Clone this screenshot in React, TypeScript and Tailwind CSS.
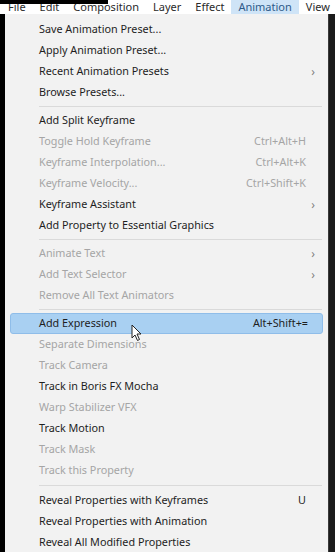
import React from "react";

type Item = {
  label: string;
  disabled?: boolean;
  shortcut?: string;
  submenu?: boolean;
  active?: boolean;
};

const groups: Item[][] = [
  [
    { label: "Save Animation Preset..." },
    { label: "Apply Animation Preset..." },
    { label: "Recent Animation Presets", submenu: true },
    { label: "Browse Presets..." },
  ],
  [
    { label: "Add Split Keyframe" },
    { label: "Toggle Hold Keyframe", disabled: true, shortcut: "Ctrl+Alt+H" },
    { label: "Keyframe Interpolation...", disabled: true, shortcut: "Ctrl+Alt+K" },
    { label: "Keyframe Velocity...", disabled: true, shortcut: "Ctrl+Shift+K" },
    { label: "Keyframe Assistant", submenu: true },
    { label: "Add Property to Essential Graphics" },
  ],
  [
    { label: "Animate Text", disabled: true, submenu: true },
    { label: "Add Text Selector", disabled: true, submenu: true },
    { label: "Remove All Text Animators", disabled: true },
  ],
  [
    { label: "Add Expression", shortcut: "Alt+Shift+=", active: true },
    { label: "Separate Dimensions", disabled: true },
    { label: "Track Camera", disabled: true },
    { label: "Track in Boris FX Mocha" },
    { label: "Warp Stabilizer VFX", disabled: true },
    { label: "Track Motion" },
    { label: "Track Mask", disabled: true },
    { label: "Track this Property", disabled: true },
  ],
  [
    { label: "Reveal Properties with Keyframes", shortcut: "U" },
    { label: "Reveal Properties with Animation" },
    { label: "Reveal All Modified Properties" },
  ],
];

const menubar = ["File", "Edit", "Composition", "Layer", "Effect", "Animation", "View"];

function MenuRow({ item }: { item: Item }) {
  const color = item.disabled ? "text-[#a5a5a5]" : "text-[#1e1e1e]";
  if (item.active) {
    return (
      <div className="mx-[5px] flex h-[21px] items-center rounded-[3px] border border-[#8fbde9] bg-[#a9d0f2] pl-[28px] pr-[2px] text-[#1e1e1e]">
        <span className="flex-1">{item.label}</span>
        <span>{item.shortcut}</span>
        <span className="w-[12px]" />
      </div>
    );
  }
  return (
    <div className={`flex h-[21px] items-center pl-[34px] pr-[8px] ${color}`}>
      <span className="flex-1 whitespace-nowrap">{item.label}</span>
      {item.shortcut && <span>{item.shortcut}</span>}
      <span className="flex w-[14px] justify-center text-[12px] text-[#808080]">
        {item.submenu ? "›" : ""}
      </span>
    </div>
  );
}

export default function App() {
  return (
    <div
      className="relative flex h-[552px] w-[335px] flex-col overflow-hidden bg-black text-[10.8px]"
      style={{ fontFamily: '"Noto Sans", "Open Sans", sans-serif' }}
    >
      {/* menu bar, cut off at the top */}
      <div className="flex h-[14px] shrink-0 items-end overflow-hidden bg-white text-[11px] text-[#2a2a2a]">
        <div className="-mb-[1px] flex items-center gap-[14px] pl-[8px] leading-[16px]">
          {menubar.map((m) => (
            <span
              key={m}
              className={
                m === "Animation"
                  ? "-mx-[7px] bg-[#cfe4f7] px-[7px] text-[#2d5a8a]"
                  : ""
              }
            >
              {m}
            </span>
          ))}
        </div>
      </div>
      <div className="absolute left-0 top-0 h-[4px] w-[108px] bg-black" />

      <div className="flex flex-1">
        <div className="w-[5px] bg-black" />
        <div className="flex-1 bg-[#f2f2f2] pt-[5px]">
          {groups.map((g, gi) => (
            <div key={gi}>
              {gi > 0 && (
                <div
                  className={`flex items-center pl-[34px] pr-[6px] ${
                    gi === groups.length - 1 ? "h-[9px]" : "h-[7px]"
                  }`}
                >
                  <div className="h-px flex-1 bg-[#dadada]" />
                </div>
              )}
              {g.map((it) => (
                <MenuRow key={it.label} item={it} />
              ))}
            </div>
          ))}
        </div>
        <div className="w-[7px] border-l border-[#3a3a3a] bg-[#1b1b1b]" />
      </div>

      {/* mouse cursor */}
      <svg
        className="absolute left-[131px] top-[324px]"
        width="12"
        height="18"
        viewBox="0 0 12 18"
      >
        <path
          d="M1 1 L1 14 L4 11 L6.5 16.5 L8.5 15.5 L6 10 L10 10 Z"
          fill="#fff"
          stroke="#222"
          strokeWidth="1"
          strokeLinejoin="round"
        />
      </svg>
    </div>
  );
}
